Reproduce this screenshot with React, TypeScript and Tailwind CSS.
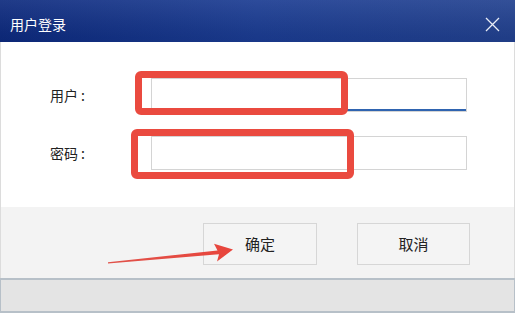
import React from "react";

export default function App() {
  return (
    <div
      className="relative w-[515px] h-[313px] overflow-hidden flex flex-col bg-white"
      style={{ fontFamily: '"Noto Sans CJK SC", "Noto Sans", sans-serif' }}
    >
      {/* Title bar */}
      <div className="h-[42px] shrink-0 flex items-center justify-between pl-[10px] pr-[15px] pt-[7px] pb-[1px] bg-linear-to-r from-[#0d2a7e] via-[#1b3c92] to-[#22418f] relative">
        <div className="absolute inset-0 bg-linear-to-b from-[#ffffff14] to-[#00000010]" />
        <span className="relative text-[14px] leading-none text-white">用户登录</span>
        <svg className="relative" width="15" height="15" viewBox="0 0 15 15">
          <path d="M1 1 L14 14 M14 1 L1 14" stroke="#e8ecf6" strokeWidth="1.3" />
        </svg>
      </div>

      {/* Body */}
      <div className="h-[165px] shrink-0 bg-white border-l border-r border-[#dcdcdc] flex flex-col pt-[36px] gap-[24px]">
        <div className="flex items-center">
          <span className="w-[84px] shrink-0 text-right text-[14px] text-[#222] leading-none whitespace-nowrap">用户 :</span>
          <div className="w-[66px] shrink-0" />
          <div className="w-[316px] h-[34px] border border-[#d4d4d4] bg-white flex flex-col justify-end">
            <div className="h-[2px] bg-[#2f64b0]" />
          </div>
        </div>
        <div className="flex items-center">
          <span className="w-[84px] shrink-0 text-right text-[14px] text-[#222] leading-none whitespace-nowrap">密码 :</span>
          <div className="w-[66px] shrink-0" />
          <div className="w-[316px] h-[34px] border border-[#d4d4d4] bg-white" />
        </div>
      </div>

      {/* Footer with buttons */}
      <div className="h-[71px] shrink-0 bg-[#f3f3f3] border-l border-r border-[#dcdcdc] flex items-start pt-[16px] pl-[202px] gap-[40px]">
        <button className="w-[114px] h-[42px] border border-[#d6d6d6] bg-[#f4f4f4] text-[15px] text-[#222]">
          确定
        </button>
        <button className="w-[113px] h-[42px] border border-[#d6d6d6] bg-[#f4f4f4] text-[15px] text-[#222]">
          取消
        </button>
      </div>

      {/* Bottom bar */}
      <div className="flex-1 bg-[#e4e4e4] border-t-2 border-b-2 border-l border-r border-[#b7c0c8]" />

      {/* Annotations */}
      <div className="absolute left-[135px] top-[71px] w-[213px] h-[44px] border-[7px] border-[#ea4a3f] rounded-[6px]" />
      <div className="absolute left-[131px] top-[129px] w-[223px] h-[50px] border-[7px] border-[#ea4a3f] rounded-[6px]" />
      <svg className="absolute left-0 top-0" width="515" height="313" viewBox="0 0 515 313">
        <defs>
          <linearGradient id="ar" x1="0" y1="0" x2="1" y2="0">
            <stop offset="0" stopColor="#e0524a" />
            <stop offset="1" stopColor="#e8453c" />
          </linearGradient>
        </defs>
        <polygon
          points="108,262.3 108,263.4 219,254.2 217,261.5 233,249.5 214,243.8 217.5,250.4"
          fill="url(#ar)"
        />
      </svg>
    </div>
  );
}
